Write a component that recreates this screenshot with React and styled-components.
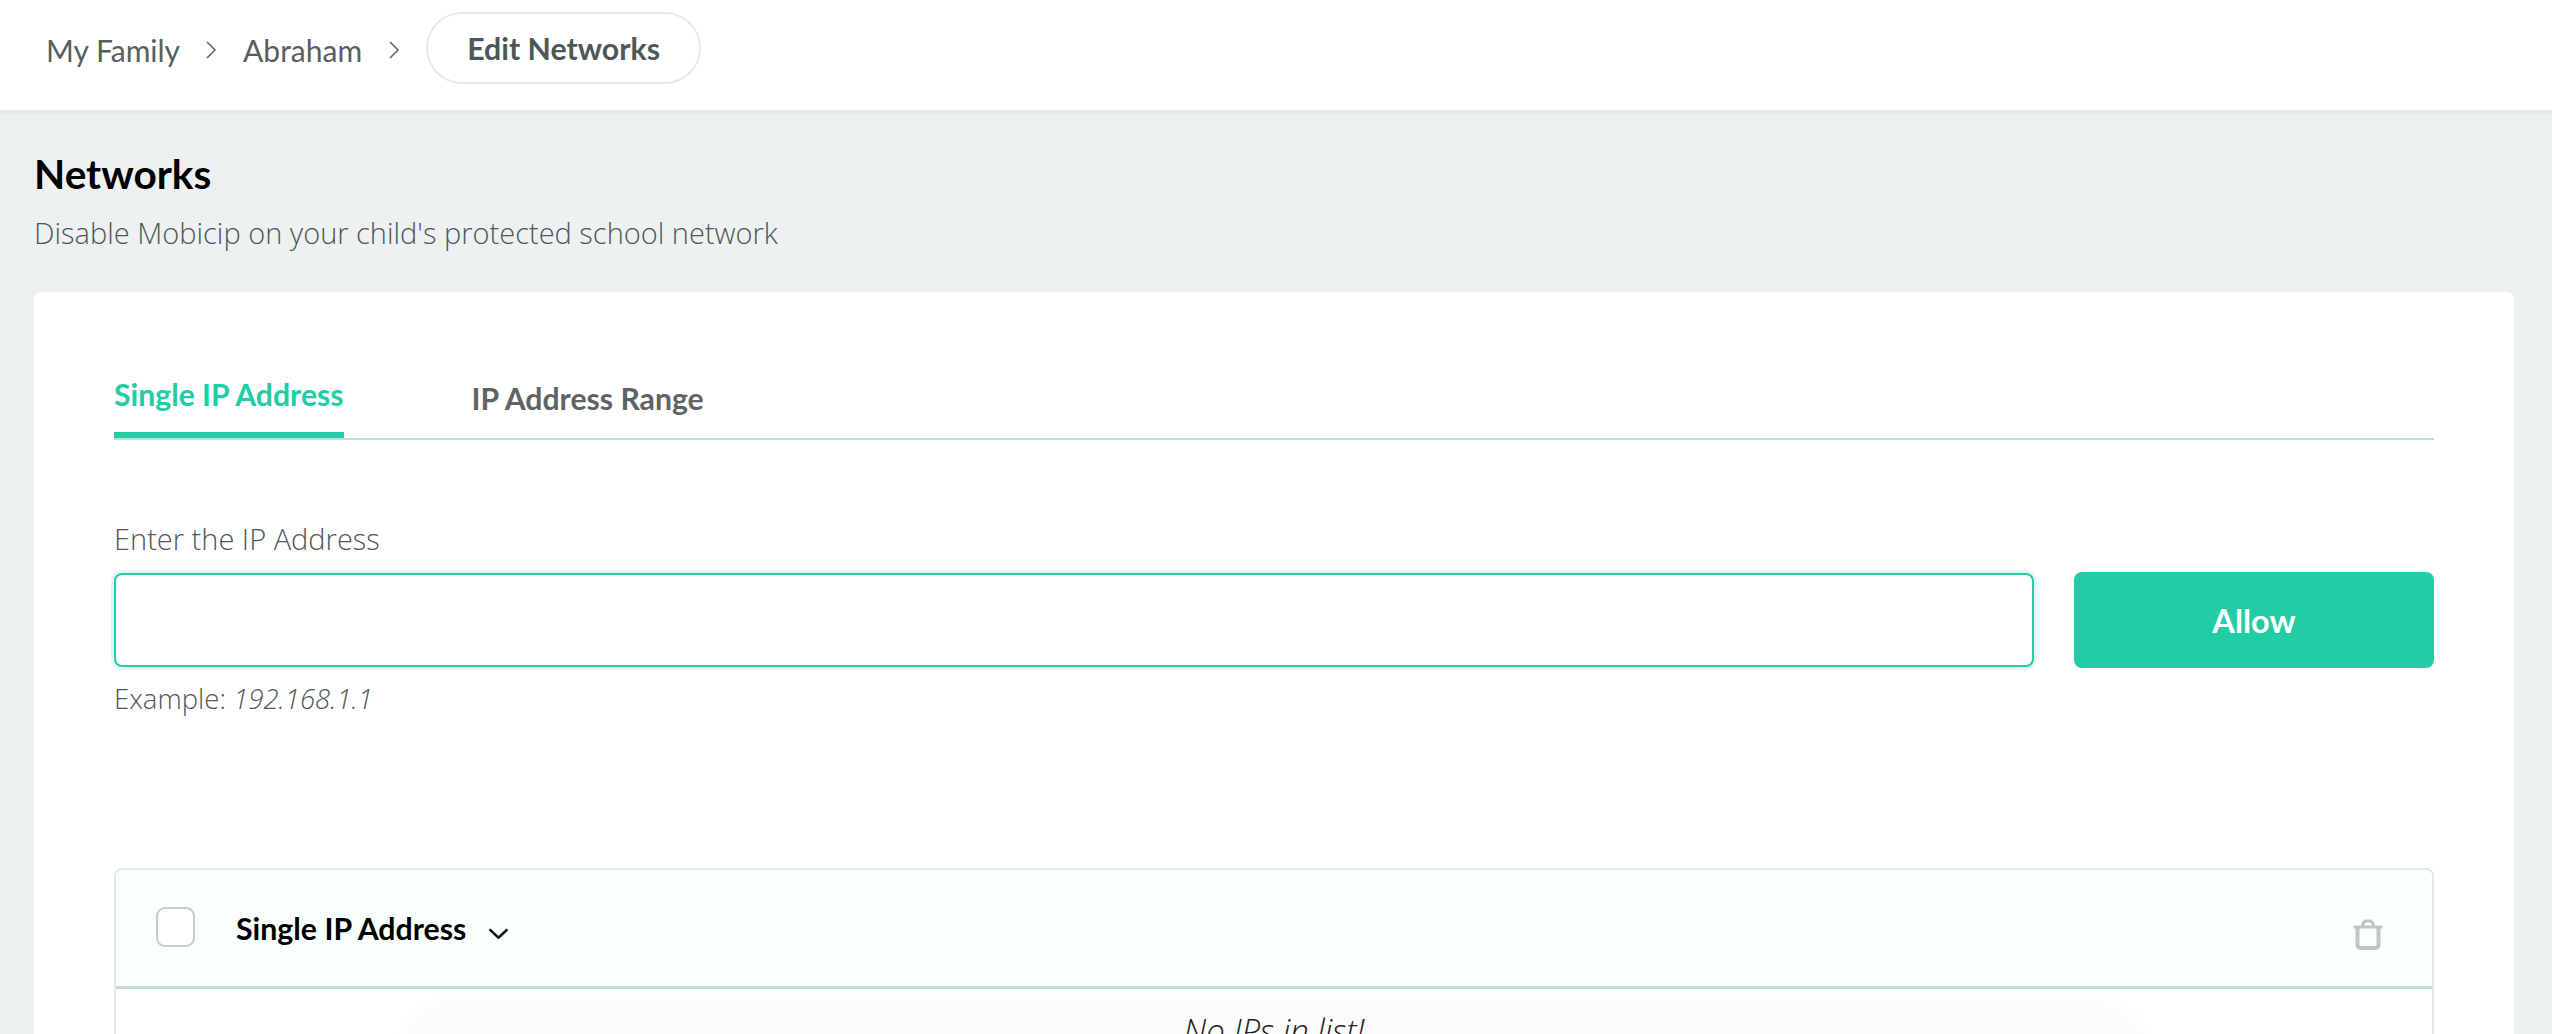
import React from "react";
import styled, { createGlobalStyle } from "styled-components";

const Global = createGlobalStyle`
  html, body { margin: 0; padding: 0; height: 1034px; overflow: hidden; background: #edf1f2; }
  * { box-sizing: border-box; }
`;
const Page = styled.div`
  width: 2552px; height: 1034px; overflow: hidden; background: #edf1f2;
  font-family: "Lato", "Liberation Sans", sans-serif;
`;
const TopBar = styled.header`
  height: 114px; background: #fff; border-bottom: 4px solid #e4eaea;
  display: flex; align-items: flex-start; padding: 12px 0 0 46px;
`;
const Crumb = styled.span`
  font-size: 30px; color: #566060; line-height: 76px; font-weight: 400;
`;
const Sep = styled.svg`
  width: 12px; height: 20px; margin: 28px 26px 0 25px; flex: none;
`;
const SepLast = styled(Sep)`margin: 28px 26px 0 26px;`;
const Pill = styled.div`
  width: 275px; height: 72px; border: 2px solid #e4eaea; border-radius: 36px;
  display: flex; align-items: center; justify-content: center;
  font-size: 30.3px; font-weight: 700; color: #4d5757;
`;
const Main = styled.main`padding: 0 38px 0 34px;`;
const Title = styled.h1`
  margin: 0; padding-top: 37px; font-size: 40.6px; line-height: 46px; font-weight: 700; color: #000;
`;
const Sub = styled.p`
  margin: 17px 0 0; font-family: "Open Sans", sans-serif; font-weight: 300; font-size: 29px;
  line-height: 38px; color: #4f5858;
`;
const Card = styled.section`
  margin-top: 40px; background: #fff; border-radius: 8px; padding: 0 80px; height: 800px;
`;
const Tabs = styled.div`
  display: flex; height: 148px; align-items: flex-end; border-bottom: 2px solid #c2dcd6;
`;
const Tab = styled.div`
  font-size: 30.2px; font-weight: 700; color: ${p => (p.$active ? "#22cca5" : "#5e6464")};
  height: ${p => (p.$active ? "66px" : "62px")};
  margin-left: ${p => (p.$active ? "0" : "128px")};
  border-bottom: ${p => (p.$active ? "6px solid #22cca5" : "none")};
  line-height: 44px;
`;
const Label = styled.label`
  display: block; margin-top: 79px; font-family: "Open Sans", sans-serif; font-weight: 300;
  font-size: 29px; line-height: 40px; color: #4f5858;
`;
const Row = styled.div`display: flex; gap: 40px; margin-top: 13px; align-items: center;`;
const Field = styled.div`
  flex: 1; height: 94px; border: 2px solid #22cca5; border-radius: 8px; background: #fff;
  box-shadow: 0 0 0 3px #e6f5f2;
`;
const Allow = styled.button`
  width: 360px; height: 96px; border: 0; border-radius: 8px; background: #22cca5; color: #fff;
  font-family: "Lato", sans-serif; font-size: 32.6px; font-weight: 700;
`;
const Hint = styled.div`
  margin-top: 12px; font-family: "Open Sans", sans-serif; font-weight: 300; font-size: 27.5px;
  line-height: 38px; color: #4f5858;
  em { font-style: italic; }
`;
const Table = styled.div`
  margin-top: 150px; border: 2px solid #e0e9e8; border-radius: 8px 8px 0 0; height: 400px;
`;
const Head = styled.div`
  height: 119px; background: #f8fffd; border-bottom: 3px solid #c6d9d6; border-radius: 6px 6px 0 0;
  display: flex; align-items: center; padding: 0 49px 0 40px;
`;
const Check = styled.span`
  width: 39px; height: 40px; border: 2px solid #c8cccc; border-radius: 9px; background: #fff;
  flex: none; margin-bottom: 2px;
`;
const HeadTitle = styled.span`
  margin-left: 41px; font-size: 30.3px; font-weight: 700; color: #000;
`;
const Chevron = styled.svg`width: 21px; height: 11px; margin: 10px 0 0 22px; flex: none;`;
const Trash = styled.svg`width: 30px; height: 31px; margin: 12px 0 0 auto; flex: none;`;
const Body = styled.div`
  height: 280px; padding: 12px 285px 0; background: #fff; overflow: hidden;
`;
const Empty = styled.div`
  height: 250px; border-radius: 60px; text-align: center; background: #fcfcfc;
  box-shadow: 0 0 14px 6px #fcfcfc;
  font-family: "Open Sans", sans-serif; font-style: italic; font-weight: 300; font-size: 33px;
  line-height: 44px; padding-top: 8px; color: #222;
`;

export default function App() {
  const sep = (
    <path d="M2 2l8 8-8 8" fill="none" stroke="#5f6868" strokeWidth="1.6" />
  );
  return (
    <Page>
      <Global />
      <TopBar>
        <Crumb>My Family</Crumb>
        <Sep viewBox="0 0 12 20">{sep}</Sep>
        <Crumb>Abraham</Crumb>
        <SepLast viewBox="0 0 12 20">{sep}</SepLast>
        <Pill>Edit Networks</Pill>
      </TopBar>
      <Main>
        <Title>Networks</Title>
        <Sub>Disable Mobicip on your child's protected school network</Sub>
        <Card>
          <Tabs>
            <Tab $active>Single IP Address</Tab>
            <Tab>IP Address Range</Tab>
          </Tabs>
          <Label>Enter the IP Address</Label>
          <Row>
            <Field />
            <Allow>Allow</Allow>
          </Row>
          <Hint>Example: <em>192.168.1.1</em></Hint>
          <Table>
            <Head>
              <Check />
              <HeadTitle>Single IP Address</HeadTitle>
              <Chevron viewBox="0 0 20 10">
                <path d="M1.5 1l8.5 8 8.5-8" fill="none" stroke="#111" strokeWidth="2.4" />
              </Chevron>
              <Trash viewBox="0 0 30 31">
                <path d="M0.5 8h29" fill="none" stroke="#bfc5c5" strokeWidth="3" />
                <path d="M4.5 8v18a3 3 0 0 0 3 3h15a3 3 0 0 0 3-3V8" fill="none" stroke="#bfc5c5" strokeWidth="4" />
                <path d="M10 7V5.5a3.5 3.5 0 0 1 3.5-3.5h3A3.5 3.5 0 0 1 20 5.5V7" fill="none" stroke="#bfc5c5" strokeWidth="3" />
              </Trash>
            </Head>
            <Body>
              <Empty>No IPs in list!</Empty>
            </Body>
          </Table>
        </Card>
      </Main>
    </Page>
  );
}
